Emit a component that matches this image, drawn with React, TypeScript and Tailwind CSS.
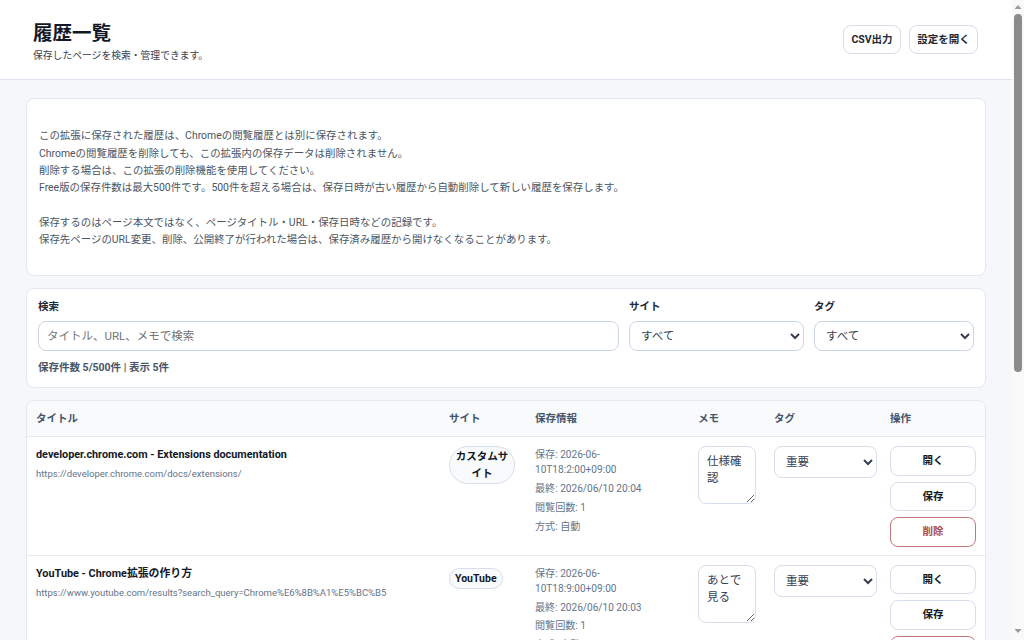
import React from "react";

const rows = [
  {
    title: "developer.chrome.com - Extensions documentation",
    url: "https://developer.chrome.com/docs/extensions/",
    site: "カスタムサイト",
    saved: "2026-06-10T18:2:00+09:00",
    last: "2026/06/10 20:04",
    memo: "仕様確認",
  },
  {
    title: "YouTube - Chrome拡張の作り方",
    url: "https://www.youtube.com/results?search_query=Chrome%E6%8B%A1%E5%BC%B5",
    site: "YouTube",
    saved: "2026-06-10T18:9:00+09:00",
    last: "2026/06/10 20:03",
    memo: "あとで見る",
  },
];

const gridCols = "grid grid-cols-[412px_86px_163px_76px_116px_106px]";
const btn =
  "h-[29.5px] w-full rounded-[8px] border border-[#d5deea] bg-white text-[10.5px] font-bold text-[#111827]";

function Row({ r }: { r: (typeof rows)[number] }) {
  return (
    <div className={`${gridCols} border-b border-[#e6ebf2] bg-white`}>
      <div className="py-[9px] pl-[9px] pr-[10px]">
        <div className="mt-[1px] text-[10.85px] font-bold leading-[15px] text-[#111827]">{r.title}</div>
        <div className="mt-[5px] text-[9.5px] leading-[14px] text-[#64748b]">{r.url}</div>
      </div>
      <div className="py-[9px] pl-[10px] pr-0">
        <span className="inline-block max-w-[66px] rounded-full border border-[#d5deea] bg-[#f8fafc] px-[5px] py-[1px] text-center text-[10.5px] font-bold leading-[17px] text-[#111827]">
          {r.site}
        </span>
      </div>
      <div className="pb-[8px] pl-[10px] pr-[10px] pt-[10px] text-[10.1px] leading-[15px] text-[#64748b]">
        <div>保存: {r.saved}</div>
        <div className="mt-[3.75px]">最終: {r.last}</div>
        <div className="mt-[3.75px]">閲覧回数: 1</div>
        <div className="mt-[3.75px]">方式: 自動</div>
      </div>
      <div className="py-[9px] pl-[10px]">
        <textarea
          defaultValue={r.memo}
          className="block h-[58px] w-[58px] rounded-[8px] border border-[#d5deea] bg-white px-[8px] py-[6px] text-[11.5px] leading-[17px] text-[#374151] outline-none"
        />
      </div>
      <div className="py-[9px] pl-[10px]">
        <select className="block h-[32px] w-[103px] rounded-[8px] border border-[#d5deea] bg-white px-[7px] text-[11.5px] text-[#374151] outline-none">
          <option>重要</option>
        </select>
      </div>
      <div className="flex flex-col gap-[6px] pb-[8px] pl-[10px] pr-[10px] pt-[9px]">
        <button className={btn}>開く</button>
        <button className={btn}>保存</button>
        <button className="h-[29.5px] w-full rounded-[8px] border border-[#c47a7a] bg-white text-[10.5px] font-bold text-[#b04a4a]">
          削除
        </button>
      </div>
    </div>
  );
}

export default function App() {
  return (
    <div className="flex h-screen overflow-hidden bg-[#f5f7fb] font-['Roboto','Noto_Sans_CJK_JP',sans-serif]">
      <div className="min-w-0 flex-1 overflow-hidden">
        <header className="flex h-[80px] items-center justify-between border-b border-[#dfe5ee] bg-white pl-[33px] pr-[34px]">
          <div className="pt-[4px]">
            <h1 className="text-[19.5px] font-bold leading-[26px] text-[#111827]">履歴一覧</h1>
            <p className="mt-[2px] text-[9.8px] leading-[14px] text-[#374151]">保存したページを検索・管理できます。</p>
          </div>
          <div className="flex gap-[8px]">
            <button className="h-[29px] w-[58px] rounded-[8px] border border-[#d5deea] bg-white text-[10.5px] font-bold text-[#1f2937]">CSV出力</button>
            <button className="h-[29px] w-[69px] rounded-[8px] border border-[#d5deea] bg-white text-[10.5px] font-bold text-[#1f2937]">設定を開く</button>
          </div>
        </header>
        <main className="flex flex-col gap-[12px] pb-[20px] pl-[26px] pr-[26px] pt-[18px]">
          <section className="rounded-[8px] border border-[#e2e8f0] bg-white pb-[10px] pl-[12px] pr-[12px] pt-[11px]">
            <p className="whitespace-pre-line text-[10.45px] leading-[17.25px] text-[#4b5563]">
              {"\nこの拡張に保存された履歴は、Chromeの閲覧履歴とは別に保存されます。\nChromeの閲覧履歴を削除しても、この拡張内の保存データは削除されません。\n削除する場合は、この拡張の削除機能を使用してください。\nFree版の保存件数は最大500件です。500件を超える場合は、保存日時が古い履歴から自動削除して新しい履歴を保存します。\n\n保存するのはページ本文ではなく、ページタイトル・URL・保存日時などの記録です。\n保存先ページのURL変更、削除、公開終了が行われた場合は、保存済み履歴から開けなくなることがあります。\n\n"}
            </p>
          </section>
          <section className="rounded-[8px] border border-[#e2e8f0] bg-white pb-[12px] pl-[11px] pr-[10px] pt-[10px]">
            <div className="grid grid-cols-[581px_175px_160px] gap-[10px]">
              <label className="block">
                <span className="block text-[10.5px] font-bold leading-[15px] text-[#1f2937]">検索</span>
                <input
                  placeholder="タイトル、URL、メモで検索"
                  className="mt-[7px] block h-[30px] w-full rounded-[8px] border border-[#ccd6e3] bg-white px-[8px] text-[11.5px] text-[#374151] outline-none placeholder:text-[#757575]"
                />
              </label>
              <label className="block">
                <span className="block text-[10.5px] font-bold leading-[15px] text-[#1f2937]">サイト</span>
                <select className="mt-[7px] block h-[30px] w-full rounded-[8px] border border-[#ccd6e3] bg-white px-[7px] text-[11.5px] text-[#374151] outline-none">
                  <option>すべて</option>
                </select>
              </label>
              <label className="block">
                <span className="block text-[10.5px] font-bold leading-[15px] text-[#1f2937]">タグ</span>
                <select className="mt-[7px] block h-[30px] w-full rounded-[8px] border border-[#ccd6e3] bg-white px-[7px] text-[11.5px] text-[#374151] outline-none">
                  <option>すべて</option>
                </select>
              </label>
            </div>
            <p className="mt-[9px] text-[10.5px] font-bold leading-[15px] text-[#475569]">保存件数 5/500件 | 表示 5件</p>
          </section>
          <section className="overflow-hidden rounded-[8px] border border-[#e2e8f0] bg-white">
            <div className={`${gridCols} h-[36px] items-center border-b border-[#e2e8f0] bg-[#f8fafc] text-[10.5px] font-bold text-[#475569]`}>
              <div className="pl-[9px]">タイトル</div>
              <div className="pl-[10px]">サイト</div>
              <div className="pl-[10px]">保存情報</div>
              <div className="pl-[10px]">メモ</div>
              <div className="pl-[10px]">タグ</div>
              <div className="pl-[10px]">操作</div>
            </div>
            {rows.map((r) => (
              <Row key={r.url} r={r} />
            ))}
          </section>
        </main>
      </div>
      <div className="flex h-screen w-[12px] shrink-0 flex-col items-center bg-[#f9f9f9]">
        <svg width="8" height="6" viewBox="0 0 8 6" className="mt-[4px]"><path d="M4 1 L7.5 5 H0.5 Z" fill="#9a9a9a" /></svg>
        <div className="mt-[4px] h-[358px] w-[8px] rounded-full bg-[#8b8b8b]" />
        <div className="flex-1" />
        <svg width="8" height="6" viewBox="0 0 8 6" className="mb-[6px]"><path d="M4 5 L7.5 1 H0.5 Z" fill="#9a9a9a" /></svg>
      </div>
    </div>
  );
}
